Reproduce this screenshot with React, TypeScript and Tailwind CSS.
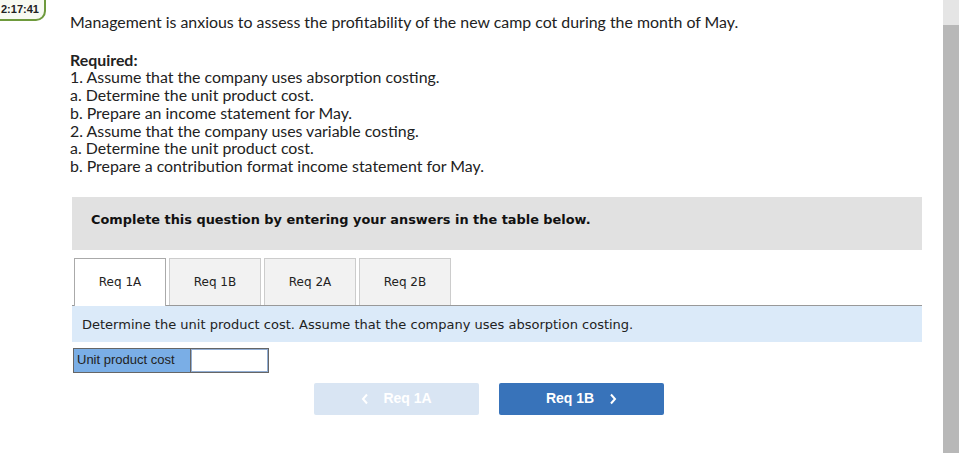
import React from "react";

export default function App() {
  const tabs = ["Req 1A", "Req 1B", "Req 2A", "Req 2B"];
  return (
    <div className="relative flex h-[453px] w-[978px] overflow-hidden bg-white">
      <div className="absolute left-[-6px] top-[-2px] flex h-[23px] items-center rounded-br-[10px] border-2 border-[#6e9a3c] bg-[#f7faf2] px-[5px] text-[11px] font-bold text-[#222]" style={{ fontFamily: "'Liberation Sans', Arial, sans-serif" }}>
        2:17:41
      </div>
      <div className="w-[943px] shrink-0 pl-[72px] pr-[21px]">
        <div className="pt-[13px] text-[15.9px] leading-[17.7px] text-[#222]" style={{ fontFamily: "Lato, sans-serif" }}>
          <p className="-ml-[2px]">Management is anxious to assess the profitability of the new camp cot during the month of May.</p>
          <p className="-ml-[2px] mt-[20px] font-bold">Required:</p>
          <p className="-ml-[2px]">1. Assume that the company uses absorption costing.</p>
          <p className="-ml-[2px]">a. Determine the unit product cost.</p>
          <p className="-ml-[2px]">b. Prepare an income statement for May.</p>
          <p className="-ml-[2px]">2. Assume that the company uses variable costing.</p>
          <p className="-ml-[2px]">a. Determine the unit product cost.</p>
          <p className="-ml-[2px]">b. Prepare a contribution format income statement for May.</p>
        </div>
        <div className="mt-[22px] h-[53px] bg-[#e1e1e1] pl-[19px] pt-[13px] text-[12.9px] font-bold text-[#111]" style={{ fontFamily: "'DejaVu Sans', Verdana, sans-serif" }}>
          Complete this question by entering your answers in the table below.
        </div>
        <div className="mt-[8px] flex h-[48px] items-end gap-[3px] border-b border-[#999] pl-[2px]" style={{ fontFamily: "'DejaVu Sans', Verdana, sans-serif" }}>
          {tabs.map((t, i) => (
            <div
              key={t}
              className={
                i === 0
                  ? "-mb-px flex h-[48px] w-[92px] items-center justify-center border border-b-0 border-[#aaa] bg-white text-[12px] text-[#222]"
                  : "flex h-[47px] w-[92px] items-center justify-center border border-b-0 border-[#ccc] bg-[#f2f2f2] text-[12px] text-[#222]"
              }
            >
              {t}
            </div>
          ))}
        </div>
        <div className="flex h-[36px] items-center bg-[#dbeaf9] pl-[10px] pt-[2px] text-[13px] text-[#222]" style={{ fontFamily: "'DejaVu Sans', Verdana, sans-serif" }}>
          Determine the unit product cost. Assume that the company uses absorption costing.
        </div>
        <div className="ml-[1px] mt-[6px] flex h-[25px] w-[196px] border border-[#666]" style={{ fontFamily: "'Liberation Sans', Arial, sans-serif" }}>
          <div className="flex w-[116px] items-center bg-[#7aaee6] pl-[3px] text-[13px] text-[#222]">Unit product cost</div>
          <div className="flex-1 border-l border-[#666] bg-white">
            <div className="h-full border border-[#4a78b8]/60"></div>
          </div>
        </div>
        <div className="mt-[10px] flex gap-[20px] pl-[242px]" style={{ fontFamily: "'Liberation Sans', Arial, sans-serif" }}>
          <div className="flex h-[32px] w-[165px] items-center justify-center gap-[14px] rounded-[2px] bg-[#d9e5f3] text-[14px] font-bold text-white">
            <svg width="8" height="12" viewBox="0 0 8 12"><path d="M6 1.5 L2 6 L6 10.5" stroke="white" strokeWidth="2" fill="none" /></svg>
            <span>Req 1A</span>
          </div>
          <div className="flex h-[32px] w-[165px] items-center justify-center gap-[15px] rounded-[2px] bg-[#3873ba] text-[14px] font-bold text-white">
            <span>Req 1B</span>
            <svg width="8" height="12" viewBox="0 0 8 12"><path d="M2 1.5 L6 6 L2 10.5" stroke="white" strokeWidth="2" fill="none" /></svg>
          </div>
        </div>
      </div>
      <div className="flex w-[16px] shrink-0 flex-col">
        <div className="h-[25px] bg-[#e5e5e5]"></div>
        <div className="flex-1 bg-[#b8b8b8]"></div>
      </div>
    </div>
  );
}
